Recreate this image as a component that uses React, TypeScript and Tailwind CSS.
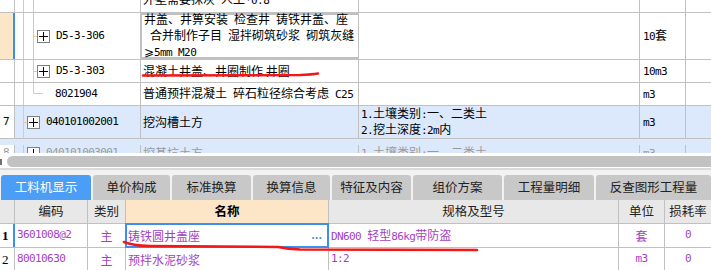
import type { ReactNode } from 'react'

const TREE = '#f5c48a'

// ascii runs get the narrow mono face, the rest falls to the CJK face
function Mixed({ text }: { text: string }) {
  return (
    <>
      {text.split(/([ -~]+)/).map((part, i) =>
        /^[ -~]+$/.test(part) ? (
          <span key={i} className="font-['DejaVu_Sans_Mono',monospace] text-[11px] tracking-[-0.6px]">
            {part}
          </span>
        ) : (
          part
        )
      )}
    </>
  )
}

function PlusBox() {
  return (
    <div className="flex h-[13px] w-[13px] shrink-0 items-center justify-center border border-[#808080] bg-white">
      <svg width="9" height="9" viewBox="0 0 9 9">
        <path d="M0 4.5H9M4.5 0V9" stroke="#000" strokeWidth="1" fill="none" />
      </svg>
    </div>
  )
}

interface TreeProps {
  h: number
  kind: 'deep' | 'leaf' | 'top' | 'none'
}

function TreeLines({ h, kind }: TreeProps) {
  const mid = Math.floor(h / 2) + 0.5
  return (
    <svg className="absolute left-0 top-0" width="126" height={h} fill="none">
      <path d={`M8.5 0V${h}`} stroke={TREE} />
      {kind === 'deep' && <path d={`M18.5 0V${h}M18.5 ${mid}H22`} stroke={TREE} />}
      {kind === 'leaf' && <path d={`M18.5 0V${mid - 1}H28`} stroke={TREE} />}
      {kind === 'top' && <path d={`M8.5 ${mid}H12`} stroke={TREE} />}
      {kind === 'none' && <path d={`M18.5 0V${h}`} stroke={TREE} />}
    </svg>
  )
}

interface RowProps {
  h: number
  className?: string
  num?: ReactNode
  numClass?: string
  tree: TreeProps['kind']
  code?: string
  plus?: boolean
  indent: string
  name?: ReactNode
  nameClass?: string
  spec?: ReactNode
  unit?: string
  textClass?: string
}

function TopRow({ h, className = '', num, numClass = '', tree, code, plus, indent, name, nameClass = '', spec, unit, textClass = 'text-black' }: RowProps) {
  return (
    <div className={`flex border-b border-[#c0c0c0] ${textClass} ${className}`} style={{ height: h }}>
      <div className={`flex w-[15px] shrink-0 items-center border-r border-[#c0c0c0] pl-[3px] font-['DejaVu_Sans_Mono',monospace] text-[11px] ${numClass}`}>
        {num}
      </div>
      <div className={`relative flex w-[126px] shrink-0 items-center gap-[6px] border-r border-[#c0c0c0] ${indent}`}>
        <TreeLines h={h - 1} kind={tree} />
        {plus && <div className="relative"><PlusBox /></div>}
        {code && (
          <span className="relative font-['DejaVu_Sans_Mono',monospace] text-[11px] tracking-[-0.6px]">{code}</span>
        )}
      </div>
      <div className={`flex w-[218px] shrink-0 flex-col justify-center whitespace-pre border-r border-[#c0c0c0] pl-[2px] leading-[14px] ${nameClass}`}>
        {name}
      </div>
      <div className="flex w-[281px] shrink-0 flex-col justify-center whitespace-pre border-r border-[#c0c0c0] pl-[2px] leading-[14px]">
        {spec}
      </div>
      <div className="flex w-[46px] shrink-0 items-center border-r border-[#c0c0c0] pl-[3px]">
        {unit && <span><Mixed text={unit} /></span>}
      </div>
      <div className="flex-1" />
    </div>
  )
}

const tabs = ['工料机显示', '单价构成', '标准换算', '换算信息', '特征及内容', '组价方案', '工程量明细', '反查图形工程量']
const tabWidths = ['w-[90px]', 'w-[77px]', 'w-[79px]', 'w-[77px]', 'w-[79px]', 'w-[89px]', 'w-[90px]', 'flex-1']

const mono = "font-['DejaVu_Sans_Mono',monospace] text-[11px] tracking-[-0.6px]"

export default function App() {
  return (
    <div className="relative h-[270px] w-[711px] overflow-hidden bg-white font-['Noto_Sans_CJK_SC',sans-serif] text-[12px]">
      {/* upper grid */}
      <div className="h-[153px] overflow-hidden">
        <TopRow
          h={25}
          className="-mt-[12px]"
          tree="none"
          indent=""
          name={<span><Mixed text="外壁需要抹灰 人工*0.8" /></span>}
        />
        <TopRow
          h={47}
          num=""
          numClass="bg-[#fde6c8] border-r-2 border-r-[#3d8ef0]"
          tree="deep"
          plus
          code="D5-3-306"
          indent="pl-[22px]"
          nameClass="border-2 border-[#808080] -ml-px w-[219px] pl-[2px]"
          name={
            <>
              <span><Mixed text="井盖、井箅安装 检查井 铸铁井盖、座" /></span>
              <span><Mixed text=" 合并制作子目 湿拌砌筑砂浆 砌筑灰缝" /></span>
              <span>⩾<Mixed text="5mm M20" /></span>
            </>
          }
          unit="10套"
        />
        <TopRow
          h={23}
          tree="deep"
          plus
          code="D5-3-303"
          indent="pl-[22px]"
          name={<span>混凝土井盖、井圈制作 井圈</span>}
          unit="10m3"
        />
        <TopRow
          h={23}
          tree="leaf"
          code="8021904"
          indent="pl-[40px]"
          name={<span><Mixed text="普通预拌混凝土 碎石粒径综合考虑 C25" /></span>}
          unit="m3"
        />
        <TopRow
          h={33}
          num="7"
          className="bg-[#dce8fc]"
          numClass="bg-white"
          tree="top"
          plus
          code="040101002001"
          indent="pl-[12px]"
          name={<span>挖沟槽土方</span>}
          spec={
            <>
              <span><Mixed text="1.土壤类别:一、二类土" /></span>
              <span><Mixed text="2.挖土深度:2m内" /></span>
            </>
          }
          unit="m3"
        />
        <TopRow
          h={23}
          num="8"
          className="bg-[#dce8fc] pt-[6px]"
          numClass="bg-white"
          textClass="text-[#9a9a9a]"
          tree="top"
          plus
          code="040101003001"
          indent="pl-[12px]"
          name={<span>挖基坑土方</span>}
          spec={<span><Mixed text="1.土壤类别:一、二类土" /></span>}
          unit="m3"
        />
      </div>

      {/* horizontal scrollbar */}
      <div className="flex h-[15px] items-center bg-white pt-[2px]">
        <div className="h-[6px] w-[2px] bg-[#707070]" />
        <div className="ml-[5px] h-[11px] flex-1 rounded-l-[6px] bg-[#c2c2c2]" />
      </div>
      <div className="h-[2px] bg-[#dadada]" />

      {/* tabs */}
      <div className="flex h-[30px] items-end gap-[2px] bg-[#f2f2f2] pl-px">
        {tabs.map((tab, i) => (
          <div
            key={tab}
            className={`flex h-[25px] items-center justify-center rounded-t-[3px] text-[12.5px] ${tabWidths[i]} ${
              i === 0 ? 'bg-[#4c9df6] text-white' : 'bg-[#c8c8c8] text-[#222]'
            }`}
          >
            {tab}
          </div>
        ))}
      </div>

      {/* lower grid */}
      <div className="flex h-[24px] border-b border-[#c0c0c0] bg-[#e8e8e8] text-[12.5px] text-[#222]">
        <div className="w-[15px] shrink-0 border-r border-[#c0c0c0]" />
        <div className="flex w-[73px] shrink-0 items-center justify-center border-r border-[#c0c0c0]">编码</div>
        <div className="flex w-[38px] shrink-0 items-center justify-center border-r border-[#c0c0c0]">类别</div>
        <div className="flex w-[203px] shrink-0 items-center justify-center border-r border-[#c0c0c0] bg-[#fde6c8] font-bold text-black">名称</div>
        <div className="flex w-[290px] shrink-0 items-center justify-center border-r border-[#c0c0c0]">规格及型号</div>
        <div className="flex w-[46px] shrink-0 items-center justify-center border-r border-[#c0c0c0]">单位</div>
        <div className="flex flex-1 items-center justify-center">损耗率</div>
      </div>
      <div className="flex h-[24px] border-b border-[#c0c0c0] text-[#a43fc2]">
        <div className="flex w-[15px] shrink-0 items-center border-r-2 border-[#3d8ef0] pl-[2px] font-['Liberation_Serif',serif] text-[13px] font-bold text-black">1</div>
        <div className={`flex w-[73px] shrink-0 items-center border-r border-[#c0c0c0] pl-[2px] ${mono}`}>3601008@2</div>
        <div className="flex w-[38px] shrink-0 items-center justify-center border-r border-[#c0c0c0]">主</div>
        <div className="-my-px -ml-px flex w-[204px] shrink-0 items-center justify-between border-2 border-[#3d8ef0] pl-[1px] pr-[5px]">
          <span>铸铁圆井盖座</span>
          <span className="pb-[3px] text-[11px] font-bold tracking-[0px] text-[#4a90d8]">...</span>
        </div>
        <div className="flex w-[290px] shrink-0 items-center border-r border-[#c0c0c0] pl-[2px]">
          <span><Mixed text="DN600 轻型86kg带防盗" /></span>
        </div>
        <div className="flex w-[46px] shrink-0 items-center justify-center border-r border-[#c0c0c0]">套</div>
        <div className={`flex flex-1 items-center justify-center ${mono}`}>0</div>
      </div>
      <div className="flex h-[23px] text-[#a43fc2]">
        <div className="flex w-[15px] shrink-0 items-center border-r border-[#c0c0c0] pl-[2px] font-['Liberation_Serif',serif] text-[13px] text-black">2</div>
        <div className={`flex w-[73px] shrink-0 items-center border-r border-[#c0c0c0] pl-[2px] ${mono}`}>80010630</div>
        <div className="flex w-[38px] shrink-0 items-center justify-center border-r border-[#c0c0c0]">主</div>
        <div className="flex w-[203px] shrink-0 items-center border-r border-[#c0c0c0] pl-[2px]">预拌水泥砂浆</div>
        <div className={`flex w-[290px] shrink-0 items-center border-r border-[#c0c0c0] pl-[2px] ${mono}`}>1:2</div>
        <div className={`flex w-[46px] shrink-0 items-center justify-center border-r border-[#c0c0c0] ${mono}`}>m3</div>
        <div className={`flex flex-1 items-center justify-center ${mono}`}>0</div>
      </div>

      {/* hand-drawn red marks over the grid */}
      <svg className="pointer-events-none absolute left-0 top-0" width="711" height="270">
        <path d="M143 75.5 L300 75 Q312 74.5 318 73.5" stroke="#f21818" strokeWidth="2.5" fill="none" strokeLinecap="round" />
        <path
          d="M124 242 Q132 245.5 150 246 L278 247 Q288 249 300 249.5 L477 250"
          stroke="#f21818"
          strokeWidth="2.5"
          fill="none"
          strokeLinecap="round"
        />
      </svg>
    </div>
  )
}
